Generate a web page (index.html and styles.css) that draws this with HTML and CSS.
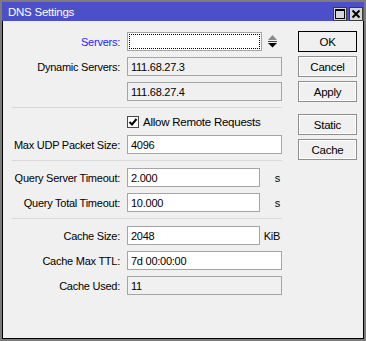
FILE: index.html
```html
<!DOCTYPE html>
<html lang="en">
<head>
    <meta charset="UTF-8">
    <title>DNS Settings</title>
    <link rel="stylesheet" href="styles.css">
</head>
<body>

    <div class="window">
        <!-- Title bar -->
        <div class="titlebar">
            <span class="title">DNS Settings</span>
            <span class="tb-btn">
                <svg width="10" height="10" viewBox="0 0 10 10"><rect x="0.5" y="0.5" width="9" height="9" fill="none" stroke="#000"/><rect x="0" y="0" width="10" height="2" fill="#000"/></svg>
            </span>
            <span class="tb-btn">
                <svg width="10" height="10" viewBox="0 0 10 10"><path d="M1.5 1.5 L8.5 8.5 M8.5 1.5 L1.5 8.5" stroke="#000" stroke-width="2"/></svg>
            </span>
        </div>

        <div class="content">
            <!-- Form -->
            <div class="form">
                <div class="row">
                    <label class="label blue">Servers:</label>
                    <div class="field servers"></div>
                    <svg class="updown" width="9" height="13" viewBox="0 0 9 13">
                        <path d="M4.5 0 L9 5 L0 5 Z" fill="#8a8a8a"/>
                        <path d="M0 6.5 H9" stroke="#444" stroke-width="1"/>
                        <path d="M0 8 L9 8 L4.5 12.5 Z" fill="#000"/>
                    </svg>
                </div>
                <div class="row">
                    <label class="label">Dynamic Servers:</label>
                    <input class="field ro" value="111.68.27.3" readonly>
                </div>
                <div class="row">
                    <label class="label"></label>
                    <input class="field ro" value="111.68.27.4" readonly>
                </div>

                <div class="sep"></div>

                <div class="row check-row">
                    <label class="label"></label>
                    <span class="checkbox">
                        <svg width="10" height="10" viewBox="0 0 10 10"><path d="M1.5 5 L4 7.5 L8.5 2" fill="none" stroke="#000" stroke-width="2"/></svg>
                    </span>
                    <span class="check-text">Allow Remote Requests</span>
                </div>
                <div class="row">
                    <label class="label">Max UDP Packet Size:</label>
                    <input class="field" value="4096">
                </div>

                <div class="sep"></div>

                <div class="row">
                    <label class="label">Query Server Timeout:</label>
                    <input class="field short" value="2.000">
                    <span class="unit">s</span>
                </div>
                <div class="row">
                    <label class="label">Query Total Timeout:</label>
                    <input class="field short" value="10.000">
                    <span class="unit">s</span>
                </div>

                <div class="sep"></div>

                <div class="row">
                    <label class="label">Cache Size:</label>
                    <input class="field short" value="2048">
                    <span class="unit">KiB</span>
                </div>
                <div class="row">
                    <label class="label">Cache Max TTL:</label>
                    <input class="field" value="7d 00:00:00">
                </div>
                <div class="row">
                    <label class="label">Cache Used:</label>
                    <input class="field ro" value="11" readonly>
                </div>
            </div>

            <!-- Buttons -->
            <div class="buttons">
                <button class="btn default">OK</button>
                <button class="btn">Cancel</button>
                <button class="btn">Apply</button>
                <button class="btn group">Static</button>
                <button class="btn">Cache</button>
            </div>
        </div>
    </div>

</body>
</html>
```

FILE: styles.css
```css
/* Global */
body {
    margin: 0;
    font-family: 'Liberation Sans', Arial, sans-serif;
    font-size: 11px;
    letter-spacing: -0.25px;
    color: #000;
}

.window {
    width: 366px;
    height: 341px;
    box-sizing: border-box;
    border: 2px solid #7c7c7c;
    display: flex;
    flex-direction: column;
    background-color: #7c7c7c;
}

/* Title bar */
.titlebar {
    height: 19px;
    background-color: #4b50c9;
    display: flex;
    align-items: flex-end;
    padding: 0 0 0 6px;
}

.title {
    color: #fff;
    font-size: 11.5px;
    flex-grow: 1;
    align-self: center;
    margin-top: 1px;
}

.tb-btn {
    width: 14px;
    height: 14px;
    box-sizing: border-box;
    border: 1px solid #3a3a3a;
    background-color: #d6d6d6;
    display: flex;
    align-items: center;
    justify-content: center;
    margin-left: 2px;
}

.tb-btn:last-child {
    margin-right: 1px;
}

/* Content area */
.content {
    flex-grow: 1;
    display: flex;
    background-color: #f0f0f0;
    border: 1px solid #000;
    border-top: none;
}

.form {
    width: 286px;
    padding: 11px 0 0 9px;
}

.row {
    display: flex;
    align-items: center;
    height: 19px;
    margin-bottom: 6px;
}

.label {
    width: 108px;
    margin-right: 7px;
    text-align: right;
    white-space: nowrap;
    flex-shrink: 0;
}

.label.blue {
    color: #1f1fff;
}

.field {
    width: 155px;
    height: 19px;
    box-sizing: border-box;
    border: 1px solid #a5a5a5;
    background-color: #fff;
    font: inherit;
    letter-spacing: inherit;
    color: #000;
    padding: 0 3px;
    outline: none;
}

.field.ro {
    background-color: #f0f0f0;
}

.field.short {
    width: 133px;
}

.field.servers {
    width: 135px;
    padding: 1px;
    box-shadow: inset 0 0 0 1px #fff;
    position: relative;
}

.field.servers::after {
    content: "";
    position: absolute;
    left: 1px;
    top: 1px;
    right: 1px;
    bottom: 1px;
    border: 1px dotted #000;
}

.updown {
    margin-left: 6px;
}

.unit {
    width: 20px;
    text-align: right;
}

.sep {
    width: 270px;
    height: 1px;
    background-color: #d9d9d9;
    margin: 2px 0 7px 0;
}

.check-row {
    height: 14px;
}

.checkbox {
    width: 12px;
    height: 12px;
    box-sizing: border-box;
    border: 1px solid #4a4a4a;
    background-color: #fff;
    display: flex;
    align-items: center;
    justify-content: center;
}

.check-text {
    margin-left: 4px;
    font-size: 11.5px;
}

/* Buttons */
.buttons {
    display: flex;
    flex-direction: column;
    padding-top: 10px;
}

.btn {
    width: 59px;
    height: 21px;
    margin-bottom: 4px;
    box-sizing: border-box;
    border: 1px solid #8e8e8e;
    box-shadow: inset 0 0 0 1px #fff;
    background-color: #f0f0f0;
    font: inherit;
    font-size: 11.5px;
    letter-spacing: inherit;
    color: #000;
    padding: 0;
}

.btn.default {
    border-color: #000;
    box-shadow: inset 0 0 0 1px #f0f0f0;
}

.btn.group {
    margin-top: 8px;
}
```
